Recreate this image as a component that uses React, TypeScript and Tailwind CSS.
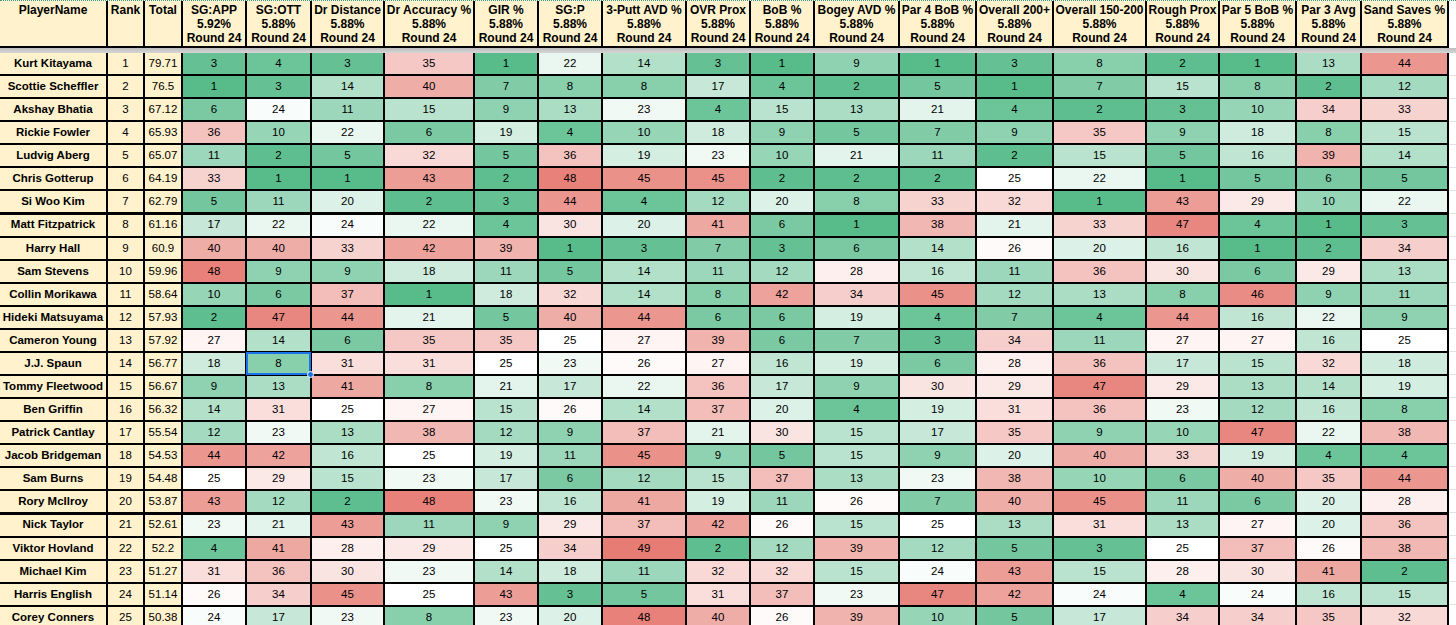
import React from "react";

const cols =
  "grid grid-cols-[106px_35px_36px_62px_63px_71px_88px_62px_62px_82px_62px_62px_83px_75px_75px_91px_71px_75px_63px_85px]";

const metrics: [string, string][] = [
  ["SG:APP", "5.92%"],
  ["SG:OTT", "5.88%"],
  ["Dr Distance", "5.88%"],
  ["Dr Accuracy %", "5.88%"],
  ["GIR %", "5.88%"],
  ["SG:P", "5.88%"],
  ["3-Putt AVD %", "5.88%"],
  ["OVR Prox", "5.88%"],
  ["BoB %", "5.88%"],
  ["Bogey AVD %", "5.88%"],
  ["Par 4 BoB %", "5.88%"],
  ["Overall 200+", "5.88%"],
  ["Overall 150-200", "5.88%"],
  ["Rough Prox", "5.88%"],
  ["Par 5 BoB %", "5.88%"],
  ["Par 3 Avg", "5.88%"],
  ["Sand Saves %", "5.88%"],
];

type Row = [string, number, string, number[]];

const rows: Row[] = [
  ["Kurt Kitayama", 1, "79.71", [3, 4, 3, 35, 1, 22, 14, 3, 1, 9, 1, 3, 8, 2, 1, 13, 44]],
  ["Scottie Scheffler", 2, "76.5", [1, 3, 14, 40, 7, 8, 8, 17, 4, 2, 5, 1, 7, 15, 8, 2, 12]],
  ["Akshay Bhatia", 3, "67.12", [6, 24, 11, 15, 9, 13, 23, 4, 15, 13, 21, 4, 2, 3, 10, 34, 33]],
  ["Rickie Fowler", 4, "65.93", [36, 10, 22, 6, 19, 4, 10, 18, 9, 5, 7, 9, 35, 9, 18, 8, 15]],
  ["Ludvig Aberg", 5, "65.07", [11, 2, 5, 32, 5, 36, 19, 23, 10, 21, 11, 2, 15, 5, 16, 39, 14]],
  ["Chris Gotterup", 6, "64.19", [33, 1, 1, 43, 2, 48, 45, 45, 2, 2, 2, 25, 22, 1, 5, 6, 5]],
  ["Si Woo Kim", 7, "62.79", [5, 11, 20, 2, 3, 44, 4, 12, 20, 8, 33, 32, 1, 43, 29, 10, 22]],
  ["Matt Fitzpatrick", 8, "61.16", [17, 22, 24, 22, 4, 30, 20, 41, 6, 1, 38, 21, 33, 47, 4, 1, 3]],
  ["Harry Hall", 9, "60.9", [40, 40, 33, 42, 39, 1, 3, 7, 3, 6, 14, 26, 20, 16, 1, 2, 34]],
  ["Sam Stevens", 10, "59.96", [48, 9, 9, 18, 11, 5, 14, 11, 12, 28, 16, 11, 36, 30, 6, 29, 13]],
  ["Collin Morikawa", 11, "58.64", [10, 6, 37, 1, 18, 32, 14, 8, 42, 34, 45, 12, 13, 8, 46, 9, 11]],
  ["Hideki Matsuyama", 12, "57.93", [2, 47, 44, 21, 5, 40, 44, 6, 6, 19, 4, 7, 4, 44, 16, 22, 9]],
  ["Cameron Young", 13, "57.92", [27, 14, 6, 35, 35, 25, 27, 39, 6, 7, 3, 34, 11, 27, 27, 16, 25]],
  ["J.J. Spaun", 14, "56.77", [18, 8, 31, 31, 25, 23, 26, 27, 16, 19, 6, 28, 36, 17, 15, 32, 18]],
  ["Tommy Fleetwood", 15, "56.67", [9, 13, 41, 8, 21, 17, 22, 36, 17, 9, 30, 29, 47, 29, 13, 14, 19]],
  ["Ben Griffin", 16, "56.32", [14, 31, 25, 27, 15, 26, 14, 37, 20, 4, 19, 31, 36, 23, 12, 16, 8]],
  ["Patrick Cantlay", 17, "55.54", [12, 23, 13, 38, 12, 9, 37, 21, 30, 15, 17, 35, 9, 10, 47, 22, 38]],
  ["Jacob Bridgeman", 18, "54.53", [44, 42, 16, 25, 19, 11, 45, 9, 5, 15, 9, 20, 40, 33, 19, 4, 4]],
  ["Sam Burns", 19, "54.48", [25, 29, 15, 23, 17, 6, 12, 15, 37, 13, 23, 38, 10, 6, 40, 35, 44]],
  ["Rory McIlroy", 20, "53.87", [43, 12, 2, 48, 23, 16, 41, 19, 11, 26, 7, 40, 45, 11, 6, 20, 28]],
  ["Nick Taylor", 21, "52.61", [23, 21, 43, 11, 9, 29, 37, 42, 26, 15, 25, 13, 31, 13, 27, 20, 36]],
  ["Viktor Hovland", 22, "52.2", [4, 41, 28, 29, 25, 34, 49, 2, 12, 39, 12, 5, 3, 25, 37, 26, 38]],
  ["Michael Kim", 23, "51.27", [31, 36, 30, 23, 14, 18, 11, 32, 32, 15, 24, 43, 15, 28, 30, 41, 2]],
  ["Harris English", 24, "51.14", [26, 34, 45, 25, 43, 3, 5, 31, 37, 23, 47, 42, 24, 4, 24, 16, 15]],
  ["Corey Conners", 25, "50.38", [24, 17, 23, 8, 23, 20, 48, 40, 26, 39, 10, 5, 17, 34, 34, 35, 32]],
];

// sheets default colour scale: green -> white -> red
function heat(v: number) {
  const g = [87, 187, 138];
  const w = [255, 255, 255];
  const r = [230, 124, 115];
  let a = g, b = w, t = (v - 1) / 24;
  if (v > 25) {
    a = w;
    b = r;
    t = (v - 25) / 24;
  }
  t = Math.max(0, Math.min(1, t));
  const c = a.map((x, i) => Math.round(x + (b[i] - x) * t));
  return `rgb(${c[0]},${c[1]},${c[2]})`;
}

function HeaderCell({ lines }: { lines: string[] }) {
  return (
    <div className="bg-[#fff2cc] h-[45px] pt-[2px] text-center font-bold text-[12px] leading-[14px] text-black whitespace-nowrap overflow-hidden">
      {lines.map((l) => (
        <div key={l}>{l}</div>
      ))}
    </div>
  );
}

export default function App() {
  return (
    <div className="w-[1456px] h-[625px] overflow-hidden bg-white font-['Liberation_Sans',Arial,sans-serif] text-black">
      <div className="border-t border-dotted border-[#3f9c5c]">
        <div className="flex">
          <div className={`${cols} gap-x-[2px] bg-black border-r-2 border-b-2 border-black`}>
            <HeaderCell lines={["PlayerName"]} />
            <HeaderCell lines={["Rank"]} />
            <HeaderCell lines={["Total"]} />
            {metrics.map(([name, pct]) => (
              <HeaderCell key={name} lines={[name, pct, "Round 24"]} />
            ))}
          </div>
          <div className="flex-1 bg-white" />
        </div>
      </div>

      <div className="h-[5px] bg-gradient-to-b from-[#bdbdbd] to-[#d6d6d6]" />

      <div className="flex">
        <div className={`${cols} gap-[2px] bg-black border-r-2 border-black`}>
          {rows.map(([name, rank, total, vals]) => (
            <React.Fragment key={name}>
              <div className="h-[21px] bg-[#fff2cc] flex items-center justify-center font-bold text-[11.5px] whitespace-nowrap overflow-hidden">
                {name}
              </div>
              <div className="h-[21px] bg-[#fff2cc] flex items-center justify-center text-[11.5px]">
                {rank}
              </div>
              <div className="h-[21px] bg-[#fff2cc] flex items-center justify-center text-[11.5px]">
                {total}
              </div>
              {vals.map((v, i) => (
                <div
                  key={i}
                  className="relative h-[21px] flex items-center justify-center text-[11.5px]"
                  style={{ background: heat(v) }}
                >
                  {v}
                  {rank === 14 && i === 1 && (
                    <>
                      <div className="absolute -inset-[1px] border-2 border-[#1a73e8]" />
                      <div className="absolute -right-[4px] -bottom-[4px] w-[7px] h-[7px] rounded-full bg-[#1a73e8] border border-white z-10" />
                    </>
                  )}
                </div>
              ))}
            </React.Fragment>
          ))}
        </div>
        <div className="flex-1 flex flex-col">
          {rows.map(([name]) => (
            <div key={name} className="h-[23px] border-b border-[#e3e3e3] shrink-0" />
          ))}
        </div>
      </div>
    </div>
  );
}
